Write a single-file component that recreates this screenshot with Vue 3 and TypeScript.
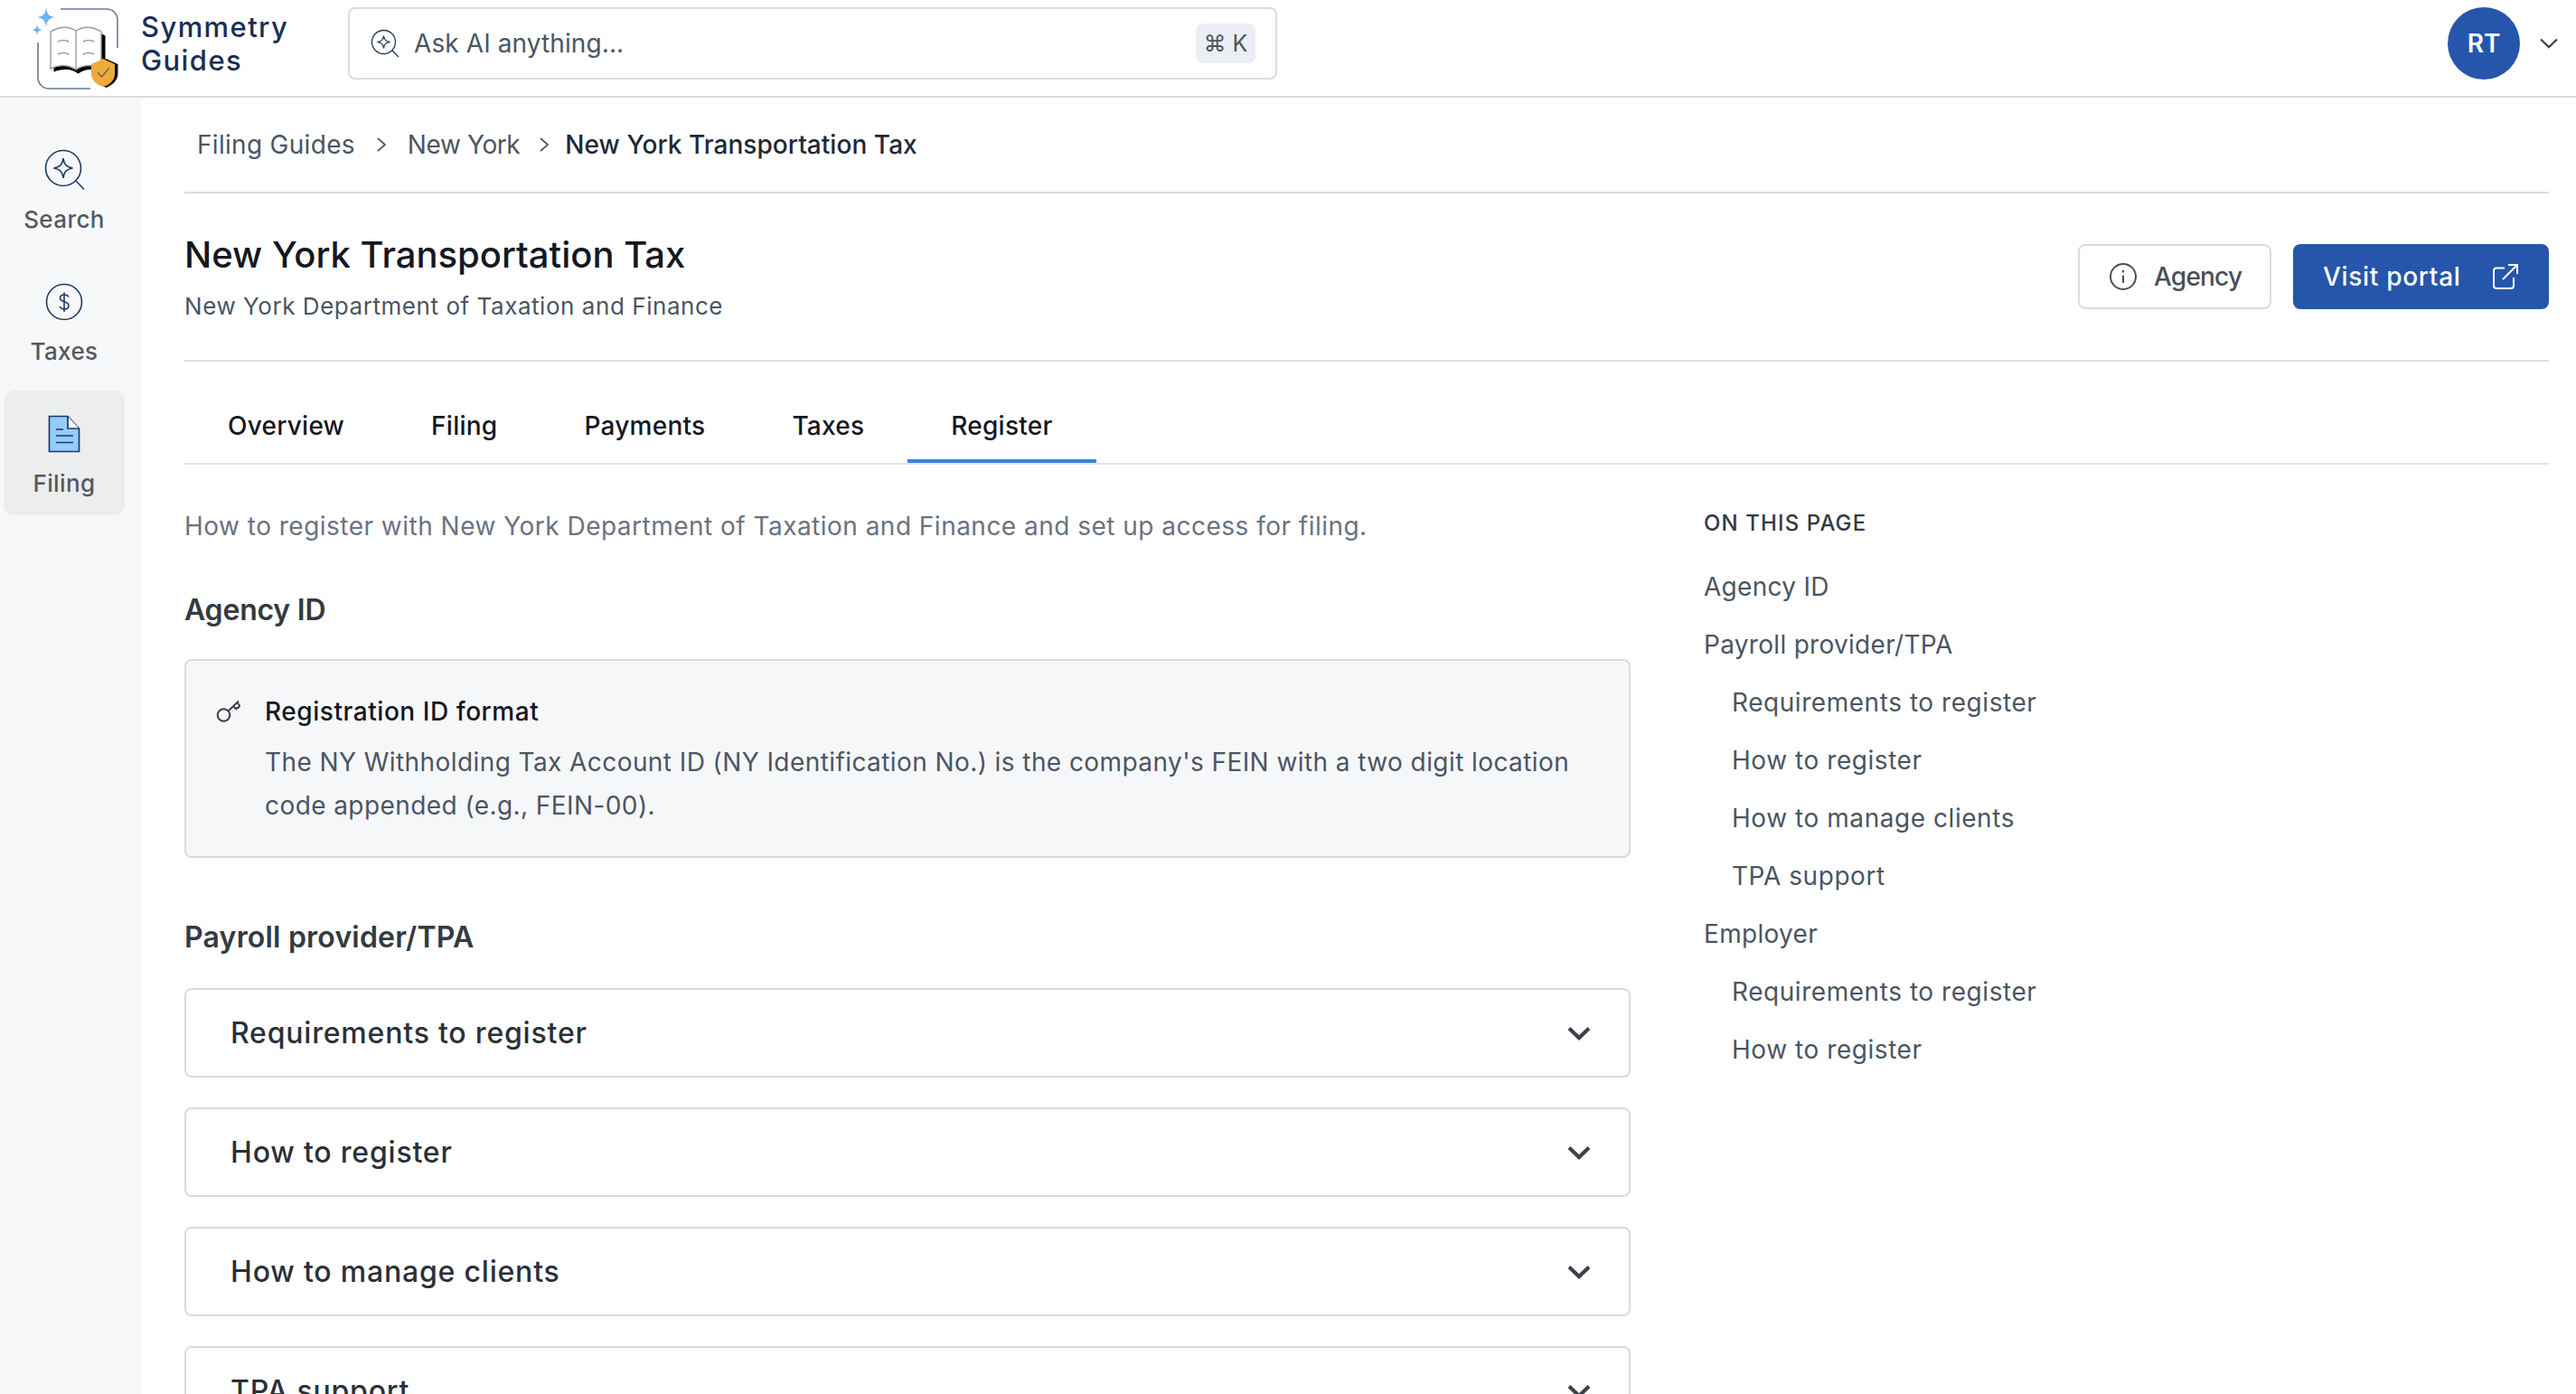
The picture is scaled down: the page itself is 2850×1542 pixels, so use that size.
<script setup lang="ts">
const tabs = ['Overview', 'Filing', 'Payments', 'Taxes', 'Register']
const accordions = ['Requirements to register', 'How to register', 'How to manage clients', 'TPA support']
const toc = [
  { label: 'Agency ID', sub: false },
  { label: 'Payroll provider/TPA', sub: false },
  { label: 'Requirements to register', sub: true },
  { label: 'How to register', sub: true },
  { label: 'How to manage clients', sub: true },
  { label: 'TPA support', sub: true },
  { label: 'Employer', sub: false },
  { label: 'Requirements to register', sub: true },
  { label: 'How to register', sub: true },
]
</script>

<template>
  <div class="app">
    <header class="topbar">
      <div class="brand">
        <svg class="logo" width="100" height="96" viewBox="0 0 100 96" fill="none">
          <path d="M27 5H78a12 12 0 0 1 12 12V48" stroke="#6b7a90" stroke-width="1.6" />
          <path d="M2 42V81a12 12 0 0 0 12 12H60" stroke="#6b7a90" stroke-width="1.6" />
          <path d="M11 3C12 11 14 13 21 14C14 15 12 18 11 25C10 18 8 15 1 14C8 13 10 11 11 3Z" fill="#6db5ee" />
          <path d="M1 21.5C1.5 26 2.5 27 6.500 28C2.500 29 1.500 30 1 34.500C0.500 30 -0.500 29 -4.500 28C-0.500 27 0.500 26 1 21.500Z" fill="#6db5ee" />
          <path d="M18 72V32C28 26 38 26 45 31C52 26 64 26 75 32V72C64 68 52 68 45 74C38 68 28 68 18 72Z" fill="#000" transform="translate(1.500 2.500)" />
          <path d="M16 71V30C26 24 36 24 44 29C52 24 62 24 72 30V71C62 66 52 67 44 72C36 67 26 66 16 71Z" fill="#fff" stroke="#9a9a9a" stroke-width="1.4" />
          <path d="M44 29V72" stroke="#9a9a9a" stroke-width="1.4" />
          <path d="M24 41C28 39 32 39 36 41M24 55C28 53 32 53 36 55M52 41C56 39 60 39 64 41M52 55C56 53 60 53 64 55" stroke="#999" stroke-width="1.4" />
          <path d="M63 66L76 60L89 66V76C89 84 83 89 76 92C69 89 63 84 63 76Z" fill="#111" transform="translate(1.500 0)" />
          <path d="M61 66L74 60L87 66V76C87 84 81 89 74 91C67 89 61 84 61 76Z" fill="#f0aa3b" />
          <path d="M68 75L72.500 80L81 70" stroke="#7a6a45" stroke-width="1.500" />
        </svg>
        <div class="brand-name">Symmetry<br />Guides</div>
      </div>
      <div class="ask">
        <svg width="34" height="34" viewBox="0 0 34 34" fill="none" stroke="#25395c" stroke-width="1.300">
          <circle cx="15.500" cy="15.500" r="13" />
          <path d="M24.800 24.800L32 32" />
          <path d="M15.500 8.500C16 13 17.500 15 22.500 15.500C17.500 16 16 18 15.500 22.500C15 18 13.500 16 8.500 15.500C13.500 15 15 13 15.500 8.500Z" />
        </svg>
        <span class="ask-text">Ask AI anything...</span>
        <kbd class="kbd">⌘ K</kbd>
      </div>
      <div class="user">
        <div class="avatar">RT</div>
        <svg width="20" height="12" viewBox="0 0 20 12" fill="none" stroke="#3f4650" stroke-width="2.400"><path d="M1 1.500L10 10L19 1.500" /></svg>
      </div>
    </header>

    <div class="shell">
      <nav class="sidebar">
        <a class="nav-item">
          <svg width="46" height="46" viewBox="0 0 46 46" fill="none" stroke="#1f3a64" stroke-width="1.600">
            <circle cx="22" cy="21" r="19.500" />
            <path d="M36 35L45 44.500" />
            <path d="M22 10C23 17 25 19.500 32.500 21C25 22.500 23 25 22 32C21 25 19 22.500 11.500 21C19 19.500 21 17 22 10Z" />
          </svg>
          <span>Search</span>
        </a>
        <a class="nav-item">
          <svg width="46" height="46" viewBox="0 0 46 46" fill="none" stroke="#1f3a64" stroke-width="1.600">
            <circle cx="23" cy="23" r="19.500" />
            <path d="M28 17.500C27 15.500 25 15 23 15C20 15 18.500 16.800 18.500 18.800C18.500 24 28 21.500 28 27C28 29.500 26 31 23 31C20.500 31 19 30 18 28M23 12.500V34" />
          </svg>
          <span>Taxes</span>
        </a>
        <a class="nav-item active">
          <svg width="46" height="46" viewBox="-5 -2 46 46" fill="#93cdfb" stroke="#1f3a64" stroke-width="1.700">
            <path d="M1.500 1.500H22L34.500 15V40.500H1.500Z" />
            <path d="M22 1.500V15H34.500" fill="#fff" />
            <path d="M9 16H17M9 23H28M9 30.500H28" fill="none" />
          </svg>
          <span>Filing</span>
        </a>
      </nav>

      <main class="main">
        <div class="crumbs">
          <span class="crumb-a">Filing Guides</span>
          <svg class="chev-a" width="12" height="18" viewBox="0 0 12 18" fill="none" stroke="#4b5563" stroke-width="1.700"><path d="M2 2L10 9L2 16" /></svg>
          <span class="crumb-b">New York</span>
          <svg class="chev-b" width="12" height="18" viewBox="0 0 12 18" fill="none" stroke="#4b5563" stroke-width="1.700"><path d="M2 2L10 9L2 16" /></svg>
          <span class="crumb-current">New York Transportation Tax</span>
        </div>

        <section class="title-row">
          <div class="title-block">
            <h1>New York Transportation Tax</h1>
            <p class="subtitle">New York Department of Taxation and Finance</p>
          </div>
          <div class="actions">
            <button class="btn btn-outline">
              <svg width="32" height="32" viewBox="0 0 32 32" fill="none" stroke="#4b4f55" stroke-width="2">
                <circle cx="16" cy="16" r="14" />
                <path d="M16 14.500V23M16 9V11.500" />
              </svg>
              Agency
            </button>
            <button class="btn btn-primary">
              Visit portal
              <svg width="30" height="30" viewBox="0 0 30 30" fill="none" stroke="#fff" stroke-width="2">
                <path d="M14 5.500H5a3 3 0 0 0-3 3V25a3 3 0 0 0 3 3H21a3 3 0 0 0 3-3V16" />
                <path d="M12 18L27.500 2.500M18 2H28V12" />
              </svg>
            </button>
          </div>
        </section>

        <div class="tabs">
          <div v-for="t in tabs" :key="t" class="tab" :class="{ on: t === 'Register' }">{{ t }}</div>
        </div>

        <div class="columns">
          <div class="content">
            <p class="intro">How to register with New York Department of Taxation and Finance and set up access for filing.</p>
            <h2 class="first">Agency ID</h2>
            <div class="callout">
              <svg class="key" width="30" height="28" viewBox="0 0 30 28" fill="none" stroke="#3d4248" stroke-width="2">
                <circle cx="8.500" cy="19" r="6.800" />
                <path d="M13.500 14.500L25 3.500M19 9.500L23 13M23.500 5L26 8.500A2.500 2.500 0 0 1 22 10.500" />
              </svg>
              <div>
                <div class="callout-title">Registration ID format</div>
                <p class="callout-body">The NY Withholding Tax Account ID (NY Identification No.) is the company's FEIN with a two digit location code appended (e.g., FEIN-00).</p>
              </div>
            </div>
            <h2 class="second">Payroll provider/TPA</h2>
            <div class="accordions">
              <div v-for="a in accordions" :key="a" class="accordion">
                <span>{{ a }}</span>
                <svg width="26" height="16" viewBox="0 0 26 16" fill="none" stroke="#3c424c" stroke-width="4.200"><path d="M2 2.500L13 13L24 2.500" /></svg>
              </div>
            </div>
          </div>
          <aside class="toc">
            <div class="toc-head">ON THIS PAGE</div>
            <div v-for="(item, i) in toc" :key="i" class="toc-item" :class="{ sub: item.sub }">{{ item.label }}</div>
          </aside>
        </div>
      </main>
    </div>
  </div>
</template>

<style>
html, body { margin: 0; height: 100%; overflow: hidden; background: #fff; }
</style>

<style scoped>
* { box-sizing: border-box; }
.app {
  height: 100vh;
  display: flex;
  flex-direction: column;
  overflow: hidden;
  font-family: Inter, "Noto Sans", sans-serif;
  color: #4b5563;
}
.topbar {
  height: 108px;
  flex: none;
  display: flex;
  align-items: center;
  border-bottom: 2px solid #d9dce0;
  padding: 0 20px 10px 40px;
}
.brand { display: flex; align-items: center; width: 345px; gap: 16px; }
.logo { margin-top: 10px; flex: none; overflow: visible; }
.brand-name { font-size: 31px; line-height: 37px; font-weight: 500; color: #1a2f55; letter-spacing: 1.4px; }
.ask {
  width: 1028px;
  height: 80px;
  display: flex;
  align-items: center;
  border: 2px solid #d9dce0;
  border-radius: 8px;
  padding: 0 22px;
  gap: 15px;
}
.ask-text { flex: 1; font-size: 28px; color: #4b5563; letter-spacing: 0.1px; }
.kbd {
  width: 66px;
  height: 44px;
  display: flex;
  align-items: center;
  justify-content: center;
  font-family: Inter, "DejaVu Sans", sans-serif;
  background: #ebeef4;
  border-radius: 8px;
  font-size: 25px;
  color: #4b5563;
}
.user { margin-left: auto; display: flex; align-items: center; gap: 22px; }
.avatar {
  width: 80px;
  height: 80px;
  border-radius: 50%;
  background: #2656ab;
  color: #fff;
  font-weight: 600;
  font-size: 28px;
  display: flex;
  align-items: center;
  justify-content: center;
}
.shell { flex: 1; display: flex; min-height: 0; }
.sidebar {
  width: 156px;
  flex: none;
  background: #f7f8fa;
  padding: 32px 18px 0 4px;
  display: flex;
  flex-direction: column;
  gap: 8px;
}
.nav-item {
  height: 138px;
  border-radius: 12px;
  display: flex;
  flex-direction: column;
  align-items: center;
  gap: 16px;
  padding-top: 25px;
  font-size: 26px;
  line-height: 32px;
  font-weight: 500;
  color: #55595f;
  letter-spacing: 0.4px;
}
.nav-item.active { background: #ecedef; }
.main { flex: 1; min-width: 0; padding: 0 30px 0 48px; }
.crumbs {
  height: 106px;
  border-bottom: 2px solid #d9dce0;
  padding-left: 14px;
  display: flex;
  align-items: center;
  font-size: 28px;
  color: #4b5563;
}
.crumb-a { letter-spacing: 0.3px; }
.chev-a { margin: 0 23px; }
.crumb-b { letter-spacing: -0.4px; }
.chev-b { margin: 0 17px 0 21px; }
.crumb-current { color: #1f2937; font-weight: 500; letter-spacing: 0.05px; }
.title-row {
  height: 186px;
  border-bottom: 2px solid #d9dce0;
  display: flex;
  align-items: center;
  justify-content: space-between;
}
.title-block { margin-bottom: 2px; }
h1 { margin: 0; font-size: 40px; line-height: 54px; font-weight: 500; color: #14181f; }
.subtitle { margin: 13px 0 0; font-size: 26px; line-height: 34px; color: #4b5563; letter-spacing: 0.55px; }
.actions { display: flex; gap: 24px; }
.btn {
  height: 72px;
  border-radius: 8px;
  display: flex;
  align-items: center;
  font: 500 28px Inter, sans-serif;
  border: 2px solid #d9dce0;
  background: #fff;
  color: #4b4f55;
}
.btn-outline { width: 214px; gap: 18px; padding-left: 32px; letter-spacing: -0.8px; }
.btn-primary { width: 283px; background: #2656ab; border-color: #2656ab; color: #fff; padding-left: 31px; gap: 34px; letter-spacing: 0.7px; }
.tabs {
  height: 114px;
  border-bottom: 2px solid #dfe2ef;
  display: flex;
}
.tab {
  padding: 33px 48px 0;
  height: 112px;
  display: flex;
  align-items: center;
  font-size: 28px;
  font-weight: 500;
  color: #14181f;
  letter-spacing: 0.25px;
  border-bottom: 4px solid transparent;
}
.tab.on { border-bottom-color: #3b82dd; }
.columns { display: flex; gap: 81px; }
.content { width: 1600px; flex: none; }
.intro { margin: 50px 0 0; font-size: 28px; line-height: 36px; color: #6b7280; letter-spacing: 0.48px; }
h2 { margin: 55px 0 0; font-size: 32px; line-height: 40px; font-weight: 600; color: #343a42; }
h2.first { letter-spacing: -0.2px; }
h2.second { margin-top: 68px; letter-spacing: 0.2px; }
.callout {
  margin-top: 34px;
  height: 220px;
  border: 2px solid #d9dcdf;
  border-radius: 8px;
  background: #f6f7f9;
  display: flex;
  padding: 39px 30px 0 33px;
  gap: 24px;
}
.key { flex: none; margin-top: 2px; }
.callout-title { font-size: 28px; line-height: 34px; font-weight: 500; color: #14181f; letter-spacing: 0.55px; }
.callout-body { margin: 15px 0 0; font-size: 28px; line-height: 48px; color: #4b5563; letter-spacing: 0.42px; }
.accordions { margin-top: 36px; display: flex; flex-direction: column; gap: 33px; }
.accordion {
  height: 99px;
  flex: none;
  border: 2px solid #d9dcdf;
  border-radius: 8px;
  display: flex;
  align-items: center;
  justify-content: space-between;
  padding: 0 42px 0 49px;
  font-size: 32px;
  font-weight: 500;
  color: #2b3038;
  letter-spacing: 0.8px;
}
.toc { flex: 1; padding-top: 50px; }
.toc-head { font-size: 24px; line-height: 30px; font-weight: 500; color: #343a42; letter-spacing: 1.1px; margin-bottom: 37px; }
.toc-item { font-size: 28px; height: 64px; line-height: 36px; color: #4b5563; letter-spacing: 0.3px; }
.toc-item.sub { padding-left: 31px; letter-spacing: 0.55px; }
</style>
